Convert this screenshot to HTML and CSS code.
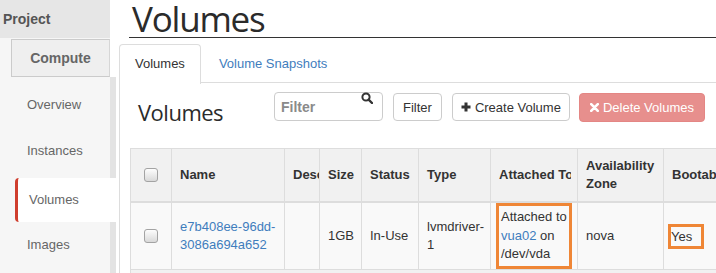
FILE: index.html
```html
<!DOCTYPE html>
<html>
<head>
<meta charset="utf-8">
<link rel="stylesheet" href="styles.css">
</head>
<body>
<div class="app">
  <aside class="sidebar">
    <div class="sb-project">Project</div>
    <div class="sb-compute-wrap"><div class="sb-compute">Compute</div></div>
    <nav class="sb-nav">
      <a class="sb-item">Overview</a>
      <a class="sb-item">Instances</a>
      <a class="sb-item active">Volumes</a>
      <a class="sb-item">Images</a>
    </nav>
  </aside>
  <main class="main">
    <div class="page-header"><h1>Volumes</h1></div>
    <ul class="tabs">
      <li class="tab active">Volumes</li>
      <li class="tab link">Volume Snapshots</li>
    </ul>
    <div class="tab-content">
      <div class="toolbar">
        <h2>Volumes</h2>
        <div class="search">
          <input class="search-input" placeholder="Filter">
          <svg class="search-icon" width="12" height="12" viewBox="0 0 12 12"><circle cx="5" cy="5" r="3.6" fill="none" stroke="#333" stroke-width="2"/><line x1="7.6" y1="7.6" x2="11" y2="11" stroke="#333" stroke-width="2.4" stroke-linecap="round"/></svg>
        </div>
        <button class="btn">Filter</button>
        <button class="btn btn-create"><svg class="ico" width="10" height="10" viewBox="0 0 10 10"><path d="M5 0.5V9.5M0.5 5H9.5" stroke="#333" stroke-width="3"/></svg>Create Volume</button>
        <button class="btn btn-danger"><svg class="ico" width="9" height="9" viewBox="0 0 9 9"><path d="M1.2 1.2L7.8 7.8M7.8 1.2L1.2 7.8" stroke="#fff" stroke-width="2.6" stroke-linecap="round"/></svg>Delete Volumes</button>
      </div>
      <table class="tbl">
        <colgroup>
          <col class="c-cb"><col class="c-name"><col class="c-desc"><col class="c-size"><col class="c-status"><col class="c-type"><col class="c-att"><col class="c-az"><col class="c-boot">
        </colgroup>
        <thead>
          <tr>
            <th class="cb-cell"><span class="cb"></span></th>
            <th>Name</th>
            <th><div class="clip clip-desc">Description</div></th>
            <th>Size</th>
            <th>Status</th>
            <th>Type</th>
            <th><div class="clip clip-att">Attached To</div></th>
            <th class="wrap">Availability Zone</th>
            <th>Bootable</th>
          </tr>
        </thead>
        <tbody>
          <tr>
            <td class="cb-cell"><span class="cb"></span></td>
            <td><a class="lnk">e7b408ee-96dd-<br>3086a694a652</a></td>
            <td></td>
            <td>1GB</td>
            <td>In-Use</td>
            <td>lvmdriver-<br>1</td>
            <td class="att-cell"><div class="mark-box">Attached to<br><a class="lnk">vua02</a> on<br>/dev/vda</div></td>
            <td>nova</td>
            <td class="boot-cell"><span class="mark-yes">Yes</span></td>
          </tr>
        </tbody>
        <tfoot>
          <tr><td colspan="9"></td></tr>
        </tfoot>
      </table>
    </div>
  </main>
</div>
</body>
</html>
```

FILE: styles.css
```css
html, body {
  margin: 0;
  height: 273px;
  overflow: hidden;
  background: #fff;
  font-family: "Liberation Sans", Arial, sans-serif;
  font-size: 13px;
  color: #333;
}

.app {
  display: flex;
  height: 273px;
}

/* Sidebar */
.sidebar {
  flex: 0 0 116px;
  display: flex;
  flex-direction: column;
}
.sb-project {
  width: 110px;
  height: 38px;
  box-sizing: border-box;
  padding-left: 3px;
  line-height: 38px;
  background: #e6e6e6;
  font-weight: bold;
  font-size: 14px;
  color: #555;
}
.sb-compute-wrap {
  width: 110px;
  box-sizing: border-box;
  padding: 1px 0 0 11px;
  background: #f6f6f6;
}
.sb-compute {
  height: 38px;
  box-sizing: border-box;
  border: 1px solid #cbcbcb;
  border-right-color: #d6d6d6;
  background: #efefef;
  font-weight: bold;
  font-size: 14px;
  color: #666;
  display: flex;
  align-items: center;
  justify-content: center;
}
.sb-nav {
  flex: 1;
  width: 110px;
  border-right: 6px solid #e3e3e3;
  background: #f6f6f6;
  padding-top: 5px;
}
.sb-item {
  display: block;
  height: 46px;
  line-height: 46px;
  padding-left: 27px;
  color: #666;
}
.sb-item.active {
  margin: 4px -8px 0 15px;
  padding-left: 11px;
  height: 44px;
  line-height: 44px;
  background: #fff;
  border-left: 3px solid #cf3e2e;
  border-radius: 4px 0 0 4px;
}

/* Main */
.main {
  flex: 1;
  min-width: 0;
  margin-left: 3px;
  overflow: hidden;
  display: flex;
  flex-direction: column;
}
.page-header {
  margin-left: 10px;
  height: 37px;
  border-bottom: 1px solid #333;
}
.page-header h1 {
  margin: 0;
  padding-left: 3px;
  font-family: "Open Sans", sans-serif;
  font-weight: 400;
  font-size: 35px;
  letter-spacing: -1.2px;
  line-height: 37px;
  color: #2b2b2b;
}

.tabs {
  display: flex;
  margin: 6px 0 0;
  padding: 0;
  list-style: none;
  height: 38px;
  border-bottom: 1px solid #ddd;
}
.tab {
  height: 38px;
  line-height: 38px;
  padding: 0 15px;
  border: 1px solid transparent;
  border-bottom: 0;
  border-radius: 4px 4px 0 0;
}
.tab.active {
  border-color: #ddd;
  background: #fff;
  height: 39px;
  color: #333;
}
.tab.link {
  margin-left: 2px;
  color: #3f7dbd;
}

.tab-content {
  flex: 1;
  border-left: 1px solid #ddd;
  padding-left: 10px;
}

.toolbar {
  display: flex;
  align-items: flex-start;
  padding: 9px 0 0 8px;
}
.toolbar h2 {
  flex: 0 0 136px;
  margin: 0;
  font-family: "Open Sans", sans-serif;
  font-weight: 400;
  font-size: 22px;
  letter-spacing: -0.5px;
  line-height: 29px;
  margin-top: 6px;
  color: #2b2b2b;
}
.search {
  position: relative;
  width: 109px;
  height: 29px;
  margin-right: 10px;
}
.search-input {
  width: 109px;
  height: 29px;
  box-sizing: border-box;
  border: 1px solid #ccc;
  border-radius: 4px;
  padding: 0 6px;
  font-family: "Liberation Sans", Arial, sans-serif;
  font-size: 14px;
  color: #555;
  outline: none;
}
.search-input::placeholder {
  color: #8a8a8a;
  font-weight: bold;
}
.search-icon {
  position: absolute;
  right: 10px;
  top: 0;
}
.btn {
  height: 28px;
  margin-top: 1px;
  margin-right: 10px;
  padding: 0 9px;
  box-sizing: border-box;
  border: 1px solid #ccc;
  border-radius: 4px;
  background: #fff;
  font-family: "Liberation Sans", Arial, sans-serif;
  font-size: 13px;
  color: #333;
  display: flex;
  align-items: center;
  white-space: nowrap;
}
.btn .ico {
  margin-right: 4px;
}
.btn-create {
  padding: 0 8px;
  margin-right: 9px;
}
.btn-danger {
  padding: 0 10px;
  background: #e78f8d;
  border-color: #e48684;
  color: #fff;
  height: 29px;
}

/* Table */
.tbl {
  margin-top: 21px;
  border-collapse: collapse;
  table-layout: fixed;
  width: 623px;
}
.c-cb { width: 41px; }
.c-name { width: 113px; }
.c-desc { width: 35px; }
.c-size { width: 42px; }
.c-status { width: 57px; }
.c-type { width: 72px; }
.c-att { width: 87px; }
.c-az { width: 86px; }
.c-boot { width: 90px; }

.tbl th, .tbl td {
  border: 1px solid #ddd;
  padding: 0 8px;
  vertical-align: middle;
  text-align: left;
  overflow: hidden;
  line-height: 18.5px;
}
.tbl th {
  background: #f1f1f1;
  font-weight: bold;
  white-space: nowrap;
  height: 52px;
  border-bottom: 2px solid #ddd;
}
.tbl th.wrap {
  white-space: normal;
}
.clip {
  overflow: hidden;
}
.clip-desc {
  margin-right: -8px;
}
.clip-att {
  margin-right: -2px;
}
.tbl tbody td {
  background: #f9f9f9;
  height: 66px;
  padding: 0 8px;
}
.tbl tfoot td {
  background: #f1f1f1;
  height: 30px;
  padding: 0;
}
.cb-cell {
  text-align: center !important;
  padding: 0 !important;
}
.cb {
  display: inline-block;
  width: 12px;
  height: 12px;
  border: 1px solid #a3a3a3;
  border-radius: 3px;
  background: linear-gradient(#fdfdfd, #d9d9d9);
  vertical-align: middle;
}
.lnk {
  color: #3f7dbd;
}
.tbl td.att-cell {
  padding: 0 5px 0 5px;
}
.mark-box {
  border: 3px solid #ef8636;
  padding: 2px 2px;
}
.tbl td.boot-cell {
  padding-left: 4px;
}
.mark-yes {
  display: inline-block;
  border: 3px solid #ef8636;
  padding: 0 9px 0 0;
  line-height: 19px;
}
```
